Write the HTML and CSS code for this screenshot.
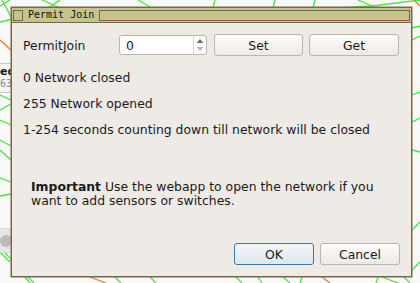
FILE: index.html
```html
<!DOCTYPE html>
<html lang="en">
<head>
  <meta charset="UTF-8" />
  <title>Permit Join</title>
  <link rel="stylesheet" href="styles.css">
</head>
<body>
  <div id="desk">
    <svg class="links" width="420" height="283" viewBox="0 0 420 283">
      <g stroke="#3ee83e" stroke-width="1.3" fill="none">
        <line x1="0" y1="22" x2="34" y2="14" />
        <line x1="2" y1="0" x2="14" y2="22" />
        <line x1="0" y1="6" x2="10" y2="0" />
        <line x1="42" y1="0" x2="60" y2="8" />
        <line x1="60" y1="0" x2="48" y2="8" />
        <line x1="138" y1="0" x2="152" y2="8" />
        <line x1="215" y1="0" x2="213" y2="8" />
        <line x1="275" y1="0" x2="273" y2="8" />
        <line x1="315" y1="0" x2="313" y2="8" />
        <line x1="358" y1="0" x2="372" y2="6" />
        <line x1="372" y1="6" x2="420" y2="0" />
        <line x1="340" y1="8" x2="372" y2="6" />
        <line x1="412" y1="28" x2="420" y2="26" />
        <line x1="412" y1="40" x2="420" y2="36" />
        <line x1="412" y1="95" x2="420" y2="92" />
        <line x1="412" y1="122" x2="420" y2="118" />
        <line x1="412" y1="150" x2="420" y2="152" />
        <line x1="412" y1="230" x2="420" y2="222" />
        <line x1="412" y1="270" x2="420" y2="262" />
        <line x1="0" y1="95" x2="11" y2="100" />
        <line x1="0" y1="110" x2="11" y2="104" />
        <line x1="0" y1="120" x2="11" y2="125" />
        <line x1="0" y1="140" x2="11" y2="146" />
        <line x1="0" y1="150" x2="11" y2="160" />
        <line x1="0" y1="178" x2="11" y2="182" />
        <line x1="0" y1="196" x2="11" y2="194" />
        <line x1="0" y1="252" x2="10" y2="262" />
        <line x1="4" y1="252" x2="14" y2="262" />
        <line x1="25" y1="277" x2="30" y2="283" />
        <line x1="28" y1="277" x2="34" y2="283" />
        <line x1="115" y1="277" x2="121" y2="283" />
        <line x1="150" y1="277" x2="156" y2="283" />
        <line x1="236" y1="277" x2="242" y2="283" />
        <line x1="258" y1="277" x2="262" y2="283" />
        <line x1="283" y1="277" x2="290" y2="283" />
        <line x1="302" y1="277" x2="300" y2="283" />
        <line x1="378" y1="277" x2="376" y2="283" />
        <line x1="382" y1="277" x2="398" y2="283" />
        <line x1="404" y1="277" x2="410" y2="283" />
      </g>
      <g stroke="#ee7a30" stroke-width="1.3" fill="none">
        <line x1="0" y1="40" x2="11" y2="50" />
        <line x1="90" y1="277" x2="106" y2="283" />
        <line x1="322" y1="277" x2="330" y2="283" />
        <line x1="414" y1="0" x2="420" y2="6" />
      </g>
    </svg>

    <div class="node">
      <b>ed</b>
      <span>63</span>
    </div>
    <div class="slider"><i></i></div>

    <div class="dialog">
      <div class="titlebar">
        <span class="close-box"></span>
        <span class="title">Permit Join</span>
        <span class="title-fill"></span>
      </div>

      <div class="content">
        <div class="row">
          <label class="label">PermitJoin</label>
          <div class="spin">
            <span class="spin-value">0</span>
            <span class="spin-arrows">
              <svg width="10" height="16" viewBox="0 0 10 16">
                <path d="M1.5 6 L5 2 L8.5 6 Z" fill="#6e6e6e" />
                <path d="M1.5 10 L5 14 L8.5 10 Z" fill="#b4b4b4" />
              </svg>
            </span>
          </div>
          <button class="btn wide">Set</button>
          <button class="btn wide last">Get</button>
        </div>

        <p class="line">0 Network closed</p>
        <p class="line">255 Network opened</p>
        <p class="line">1-254 seconds counting down till network will be closed</p>

        <p class="note"><b>Important</b> Use the webapp to open the network if you want to add sensors or switches.</p>

        <div class="actions">
          <button class="btn ok">OK</button>
          <button class="btn">Cancel</button>
        </div>
      </div>
    </div>
  </div>
</body>
</html>
```

FILE: styles.css
```css
body {
  margin: 0;
  background: #f9f9f9;
  font-family: "DejaVu Sans", sans-serif;
  font-size: 12.4px;
  color: #1a1a1a;
}

#desk {
  position: relative;
  width: 420px;
  height: 283px;
  overflow: hidden;
}

.links {
  position: absolute;
  left: 0;
  top: 0;
}

/* half hidden node behind the dialog */
.node {
  position: absolute;
  left: 0;
  top: 63px;
  width: 14px;
  height: 26px;
  background: #f4f4f4;
  border-top: 1px solid #c8c8c8;
  border-bottom: 1px solid #c8c8c8;
  display: flex;
  flex-direction: column;
  font-size: 11px;
  line-height: 12px;
  padding-top: 2px;
}

.node span {
  color: #888;
  font-family: "DejaVu Sans Mono", monospace;
  font-size: 10px;
}

.slider {
  position: absolute;
  left: 0;
  top: 228px;
  width: 20px;
  height: 23px;
  background: #e6e6e6;
  border-top: 1px solid #d6d6d6;
  border-bottom: 1px solid #d6d6d6;
  display: flex;
  align-items: center;
}

.slider i {
  width: 12px;
  height: 12px;
  border-radius: 50%;
  background: #bcbcbc;
}

.dialog {
  position: absolute;
  left: 11px;
  top: 7px;
  width: 399px;
  height: 268px;
  background: #eeebe6;
  border: 1px solid #7d6448;
  box-shadow: 0 0 0 0.5px #7d6448;
  display: flex;
  flex-direction: column;
}

.titlebar {
  height: 14px;
  background: #c4c48f;
  border-bottom: 1px solid #7d6448;
  display: flex;
  align-items: center;
  padding: 0 0 0 1px;
  gap: 5px;
}

.close-box {
  width: 8px;
  height: 9px;
  border: 1px solid #7d6448;
}

.title {
  font-family: "DejaVu Sans Mono", monospace;
  font-size: 10px;
  color: #111;
  line-height: 14px;
}

.title-fill {
  flex: 1;
  height: 9px;
  border: 1px solid #7d6448;
  margin-right: 1px;
}

.content {
  flex: 1;
  display: flex;
  flex-direction: column;
  padding: 11px 11px 11px 11px;
}

.row {
  display: flex;
  align-items: center;
  gap: 7px;
}

.label {
  width: 89px;
}

.spin {
  box-sizing: border-box;
  width: 88px;
  height: 20px;
  background: #fff;
  border: 1px solid #b9b6b1;
  border-radius: 3px;
  display: flex;
  align-items: center;
}

.spin-value {
  flex: 1;
  padding-left: 6px;
}

.spin-arrows {
  width: 12px;
  height: 18px;
  border-left: 1px solid #d8d6d2;
  display: flex;
  align-items: center;
  justify-content: center;
}

.btn {
  font-family: "DejaVu Sans", sans-serif;
  font-size: 12.4px;
  color: #1a1a1a;
  height: 22px;
  width: 80px;
  background: linear-gradient(#fdfdfc, #edeae6);
  border: 1px solid #b9b6b1;
  border-radius: 3px;
  padding: 0;
}

.btn.wide {
  width: 89px;
}

.btn.last {
  width: 90px;
  margin-left: -1px;
}

.btn.ok {
  border-color: #3b78a6;
  background: linear-gradient(#f2f6f9, #dfe7ee);
}

.line {
  margin: 0;
  margin-top: 11px;
  line-height: 15px;
}

.line:first-of-type {
  margin-top: 14px;
}

.note {
  margin: 43px 0 0 8px;
  line-height: 14px;
}

.actions {
  margin-top: auto;
  display: flex;
  justify-content: flex-end;
  gap: 6px;
}
```
